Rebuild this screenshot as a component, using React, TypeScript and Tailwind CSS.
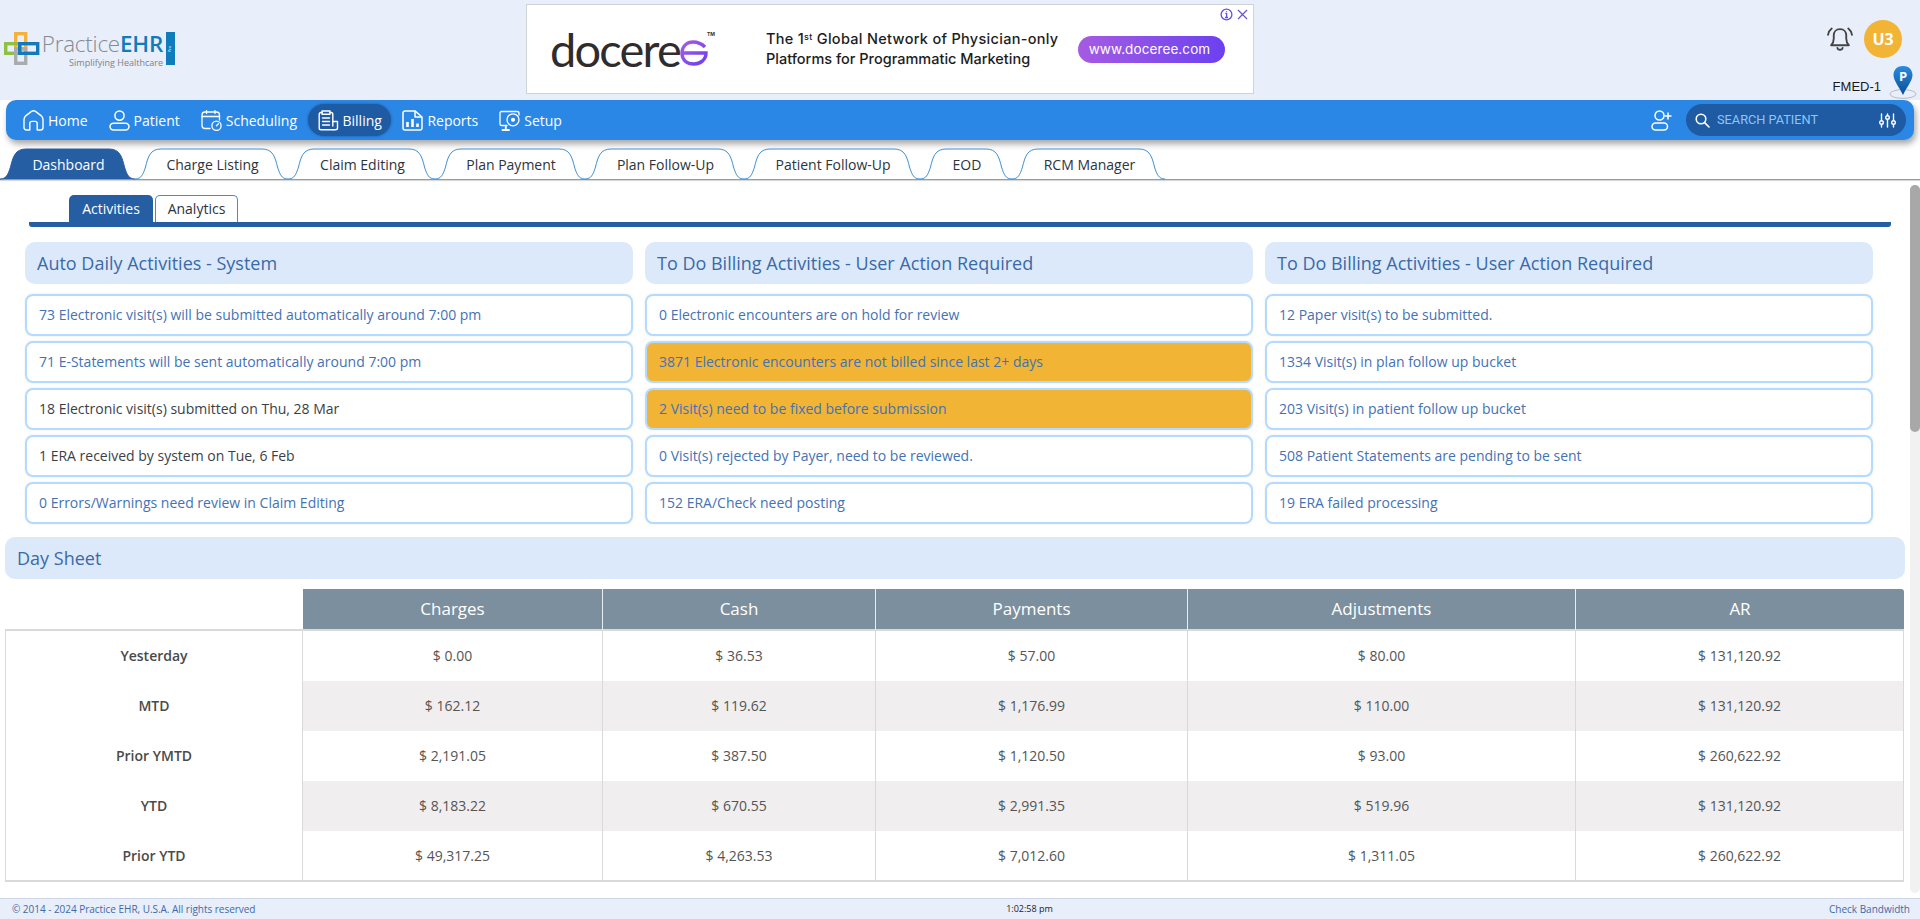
import React from "react";

const navIconClass = "w-[21px] h-[21px] shrink-0";

const HomeIcon = () => (
  <svg viewBox="0 0 21 21" className={navIconClass} fill="none" stroke="white" strokeWidth="1.4" strokeLinejoin="round" strokeLinecap="round">
    <path d="M1 9.5 C1 7.5 2 6.5 3 5.6 L8.5 1.4 C9.7 .6 11.3 .6 12.5 1.4 L18 5.6 C19 6.5 20 7.5 20 9.5 V17.5 C20 19 19 20 17.5 20 H14.2 V13.5 C14.2 12.2 13.3 11.4 12 11.4 H9 C7.7 11.4 6.8 12.2 6.8 13.5 V20 H3.5 C2 20 1 19 1 17.5 Z" />
  </svg>
);
const PatientIcon = () => (
  <svg viewBox="0 0 21 21" className={navIconClass} fill="none" stroke="white" strokeWidth="1.5">
    <circle cx="10.5" cy="5.6" r="4.6" />
    <rect x="1" y="13.2" width="19" height="6.8" rx="3.4" />
  </svg>
);
const ScheduleIcon = () => (
  <svg viewBox="0 0 21 21" className={navIconClass} fill="none" stroke="white" strokeWidth="1.3" strokeLinecap="round">
    <path d="M9 18.5 H4 C2.3 18.5 1 17.2 1 15.5 V5 C1 3.3 2.3 2 4 2 H15.5 C17.2 2 18.5 3.3 18.5 5 V10" />
    <path d="M1 6.5 H18.5 M5.5 .6 V3.5 M14 .6 V3.5" />
    <circle cx="15.5" cy="15.7" r="4.6" />
    <path d="M15.5 15.7 L17.4 13.8" />
  </svg>
);
const BillingIcon = () => (
  <svg viewBox="0 0 21 21" className={navIconClass} fill="none" stroke="white" strokeWidth="1.4" strokeLinecap="round" strokeLinejoin="round">
    <path d="M4 2.5 H3 C2 2.5 1.2 3.3 1.2 4.3 V18 C1.2 19 2 19.8 3 19.8 H15 M12 2.5 H13 C14 2.5 14.8 3.3 14.8 4.3 V16" />
    <path d="M4 1 H12 V4.2 H4 Z" />
    <path d="M4.5 8 H11.5 M4.5 11.5 H11.5 M4.5 15 H11.5" />
    <path d="M15 11.5 H19.5 V18 C19.5 19 18.7 19.8 17.5 19.8 H15" />
  </svg>
);
const ReportsIcon = () => (
  <svg viewBox="0 0 21 21" className={navIconClass} fill="none" stroke="white" strokeWidth="1.5" strokeLinejoin="round">
    <path d="M3 .9 H13 L20 7 V18 C20 19.2 19.2 20 18 20 H3 C1.8 20 1 19.2 1 18 V3 C1 1.8 1.8 .9 3 .9 Z" />
    <path d="M13 1 V7 H20" />
    <path d="M5.5 12 V17 M10.5 9 V17 M15.5 13.5 V17" strokeWidth="2.6" />
  </svg>
);
const SetupIcon = () => (
  <svg viewBox="0 0 21 21" className={navIconClass} fill="none" stroke="white" strokeWidth="1.3" strokeLinecap="round">
    <path d="M8 15.5 H2.5 C1.6 15.5 1 14.9 1 14 V3 C1 2.1 1.6 1.5 2.5 1.5 H18 C19.2 1.5 20 2.3 20 3.2 V5" />
    <circle cx="14" cy="9.8" r="6" />
    <circle cx="14" cy="9.8" r="1.4" fill="white" />
    <path d="M6.8 15.8 V19.5 M3.5 20 H10" strokeWidth="1.8" />
  </svg>
);

const navItems = [
  { label: "Home", icon: <HomeIcon /> },
  { label: "Patient", icon: <PatientIcon /> },
  { label: "Scheduling", icon: <ScheduleIcon /> },
  { label: "Billing", icon: <BillingIcon />, active: true },
  { label: "Reports", icon: <ReportsIcon /> },
  { label: "Setup", icon: <SetupIcon /> },
];

const tabs = [
  { label: "Dashboard", w: 135, active: true },
  { label: "Charge Listing", w: 153 },
  { label: "Claim Editing", w: 147 },
  { label: "Plan Payment", w: 150 },
  { label: "Plan Follow-Up", w: 159 },
  { label: "Patient Follow-Up", w: 176 },
  { label: "EOD", w: 92 },
  { label: "RCM Manager", w: 153 },
];

const Tab = ({ label, w, active }: { label: string; w: number; active?: boolean }) => {
  const d = `M0 31 C6 31 8 27 10.5 19 C13 9 15 1 26 1 L${w - 26} 1 C${w - 15} 1 ${w - 13} 9 ${w - 10.5} 19 C${w - 8} 27 ${w - 6} 31 ${w} 31`;
  return (
    <div className="relative h-[31px] flex items-center justify-center shrink-0" style={{ width: w }}>
      <svg className="absolute inset-0 overflow-visible" width={w} height={31} viewBox={`0 0 ${w} 31`}>
        <path d={d} fill={active ? "#265ea4" : "white"} stroke={active ? "#265ea4" : "#3d8fd3"} strokeWidth="1" />
      </svg>
      <span className={`relative text-[14px] mt-[2px] ml-[2px] ${active ? "text-white" : "text-[#2c3440]"}`}>{label}</span>
    </div>
  );
};

type Row = { t: string; dark?: boolean; warn?: boolean };
const columns: { title: string; rows: Row[] }[] = [
  {
    title: "Auto Daily Activities - System",
    rows: [
      { t: "73 Electronic visit(s) will be submitted automatically around 7:00 pm" },
      { t: "71 E-Statements will be sent automatically around 7:00 pm" },
      { t: "18 Electronic visit(s) submitted on Thu, 28 Mar", dark: true },
      { t: "1 ERA received by system on Tue, 6 Feb", dark: true },
      { t: "0 Errors/Warnings need review in Claim Editing" },
    ],
  },
  {
    title: "To Do Billing Activities - User Action Required",
    rows: [
      { t: "0 Electronic encounters are on hold for review" },
      { t: "3871 Electronic encounters are not billed since last 2+ days", warn: true },
      { t: "2 Visit(s) need to be fixed before submission", warn: true },
      { t: "0 Visit(s) rejected by Payer, need to be reviewed." },
      { t: "152 ERA/Check need posting" },
    ],
  },
  {
    title: "To Do Billing Activities - User Action Required",
    rows: [
      { t: "12 Paper visit(s) to be submitted." },
      { t: "1334 Visit(s) in plan follow up bucket" },
      { t: "203 Visit(s) in patient follow up bucket" },
      { t: "508 Patient Statements are pending to be sent" },
      { t: "19 ERA failed processing" },
    ],
  },
];

const headers = ["Charges", "Cash", "Payments", "Adjustments", "AR"];
const sheet = [
  ["Yesterday", "$ 0.00", "$ 36.53", "$ 57.00", "$ 80.00", "$ 131,120.92"],
  ["MTD", "$ 162.12", "$ 119.62", "$ 1,176.99", "$ 110.00", "$ 131,120.92"],
  ["Prior YMTD", "$ 2,191.05", "$ 387.50", "$ 1,120.50", "$ 93.00", "$ 260,622.92"],
  ["YTD", "$ 8,183.22", "$ 670.55", "$ 2,991.35", "$ 519.96", "$ 131,120.92"],
  ["Prior YTD", "$ 49,317.25", "$ 4,263.53", "$ 7,012.60", "$ 1,311.05", "$ 260,622.92"],
];

const Logo = () => (
  <div className="flex items-start mt-[32px] ml-[4px] w-[522px]">
    <svg width="36" height="33" viewBox="0 0 36 33" fill="none" className="shrink-0">
      <rect x="11.7" y="1.7" width="10" height="15" stroke="#f4b23c" strokeWidth="3.4" />
      <rect x="1.7" y="11.7" width="14" height="9.6" stroke="#8dc13f" strokeWidth="3.4" />
      <rect x="11.7" y="17" width="10" height="14.3" stroke="#a9abad" strokeWidth="3.4" />
      <rect x="15.7" y="11.7" width="18" height="9.6" stroke="#1478bd" strokeWidth="3.4" />
    </svg>
    <div className="flex flex-col items-end ml-[1px] w-[122px]">
      <div className="text-[22.4px] leading-[24px] text-[#858b92] font-light whitespace-nowrap tracking-[-0.2px]">
        Practice<span className="text-[#0f7cbc] font-semibold">EHR</span>
      </div>
      <div className="text-[9px] leading-[11px] mt-[1px] text-[#7e8388] whitespace-nowrap">Simplifying Healthcare</div>
    </div>
    <div className="ml-[3px] w-[9px] h-[33px] bg-[#0f7cbc] flex items-center justify-center">
      <span className="text-[4px] text-white rotate-[-90deg]">Pro</span>
    </div>
  </div>
);

const Ad = () => (
  <div className="relative mt-[4px] w-[728px] h-[90px] bg-white border border-[#cfd2d6] flex items-center shrink-0 font-['Inter',sans-serif]">
    <div className="flex items-center ml-[23px] w-[216px] shrink-0">
      <span className="text-[47px] leading-[50px] text-[#2f2c2e] font-['Lato',sans-serif] tracking-[-1.8px]">docere</span>
      <svg width="30" height="28" viewBox="0 0 30 28" fill="none" className="mt-[7px] -ml-[1px]">
        <defs>
          <linearGradient id="dg" x1="0" y1="0" x2="1" y2="1">
            <stop offset="0" stopColor="#a95ce0" />
            <stop offset="1" stopColor="#6a3ff0" />
          </linearGradient>
        </defs>
        <path d="M3 14 C3 7 8 3 14 3 C19 3 23 5 26 8 M3 14 H27 C27 21 21 25 15 25 C8 25 3 21 3 14" stroke="url(#dg)" strokeWidth="3.4" />
      </svg>
      <span className="text-[5px] font-bold text-[#333] self-start mt-[7px] -ml-[2px]">TM</span>
    </div>
    <div className="text-[14.5px] leading-[20px] font-medium text-[#1c1c1c] w-[312px] shrink-0 whitespace-nowrap">
      <div className="tracking-[0.3px]">The 1<sup className="text-[9px]">st</sup> Global Network of Physician-only</div>
      <div>Platforms for Programmatic Marketing</div>
    </div>
    <div className="w-[147px] h-[27px] rounded-full bg-gradient-to-r from-[#a65ae2] to-[#6c40f0] text-white text-[13.5px] tracking-[0.1px] pr-[4px] flex items-center justify-center shrink-0">
      www.doceree.com
    </div>
    <div className="absolute right-[5px] top-[3px] flex items-center gap-[4px]">
      <svg width="13" height="13" viewBox="0 0 13 13" fill="none" stroke="#6a4fd8" strokeWidth="1.3">
        <circle cx="6.5" cy="6.5" r="5.4" />
        <path d="M6.5 3.2 V3.9 M5.3 5.4 H6.6 V9.4 M5 9.5 H8" />
      </svg>
      <svg width="11" height="11" viewBox="0 0 11 11" fill="none" stroke="#6a4fd8" strokeWidth="1.2">
        <path d="M1 1 L10 10 M10 1 L1 10" />
      </svg>
    </div>
  </div>
);

const HeaderRight = () => (
  <div className="flex-1 relative flex flex-col items-end pr-[4px]">
    <div className="flex items-center mt-[20px] mr-[14px] gap-[11px]">
      <svg width="26" height="26" viewBox="0 0 25 25" fill="none" stroke="#444" strokeWidth="1.8" strokeLinecap="round" strokeLinejoin="round">
        <path d="M12.5 3 C8.5 3 6.5 6 6.5 9 V12 C6.5 15 5.5 17 4 18.5 H21 C19.5 17 18.5 15 18.5 12 V9 C18.5 6 16.5 3 12.5 3 Z" />
        <path d="M10 21 C10.5 23.5 14.5 23.5 15 21" />
        <path d="M4.5 2.5 C2.5 4 1.5 6 1 8.5 M20.5 2.5 C22.5 4 23.5 6 24 8.5" />
      </svg>
      <div className="w-[38px] h-[38px] rounded-full bg-[#f1b434] text-white text-[16px] font-bold flex items-center justify-center">U3</div>
    </div>
    <div className="flex items-end mt-[8px] h-[34px] -mr-[1px]">
      <span className="text-[13px] leading-[15px] text-[#1a1a1a] font-['Liberation_Sans',sans-serif] mb-[6px] mr-[8px]">FMED-1</span>
      <svg width="28" height="34" viewBox="0 0 28 34" fill="none">
        <ellipse cx="14" cy="28" rx="13" ry="4.4" stroke="#b9bcc0" strokeWidth="1" />
        <defs>
          <linearGradient id="pin" x1="0" y1="0" x2="0" y2="1">
            <stop offset="0" stopColor="#2a8be0" />
            <stop offset="1" stopColor="#0b4d96" />
          </linearGradient>
        </defs>
        <path d="M14 0 C21 0 23.5 5 23.5 9 C23.5 15 17 22 14 29 C11 22 4.5 15 4.5 9 C4.5 5 7 0 14 0 Z" fill="url(#pin)" />
        <text x="14" y="15" textAnchor="middle" fontSize="13" fontWeight="700" fill="white" fontFamily="Open Sans">P</text>
      </svg>
    </div>
  </div>
);

const Nav = () => (
  <div className="mx-[6px] h-[40px] rounded-[10px] bg-[#2b87e6] shadow-[2px_4px_6px_rgba(0,0,0,0.35)] flex items-center justify-between pl-[6.5px] pr-[8px]">
    <div className="flex items-center">
      {navItems.map((n) => (
        <div
          key={n.label}
          className={`h-[32px] flex items-center gap-[4px] text-[14px] text-white rounded-full ${n.active ? "bg-[#1f5ba3] shadow-[0_0_3px_rgba(20,60,120,0.6)] pl-[10px] pr-[9px] mr-[1px]" : "px-[10.5px]"}`}
        >
          {n.icon}
          <span>{n.label}</span>
        </div>
      ))}
    </div>
    <div className="flex items-center gap-[14px]">
      <svg width="21" height="21" viewBox="0 0 21 21" fill="none" stroke="white" strokeWidth="1.5" strokeLinecap="round">
        <circle cx="8.5" cy="5.5" r="4.5" />
        <rect x="1" y="13" width="15.5" height="7" rx="3.5" />
        <path d="M17 3 V9 M14 6 H20" />
      </svg>
      <div className="w-[220px] h-[32px] rounded-full bg-[#1f5ba3] flex items-center pl-[9px] pr-[10px]">
        <svg width="15" height="15" viewBox="0 0 15 15" fill="none" stroke="white" strokeWidth="1.6" strokeLinecap="round" className="shrink-0">
          <circle cx="6" cy="6" r="4.8" />
          <path d="M9.6 9.6 L14 14" />
        </svg>
        <span className="ml-[7px] text-[12.75px] text-[#8fc4f7] font-['Roboto',sans-serif] flex-1">SEARCH PATIENT</span>
        <svg width="17" height="15" viewBox="0 0 17 15" fill="none" stroke="white" strokeWidth="1.4" strokeLinecap="round">
          <path d="M2.5 1 V14 M8.5 1 V14 M14.5 1 V14" />
          <circle cx="2.5" cy="9.5" r="1.8" fill="#1f5ba3" />
          <circle cx="8.5" cy="4.5" r="1.8" fill="#1f5ba3" />
          <circle cx="14.5" cy="9.5" r="1.8" fill="#1f5ba3" />
        </svg>
      </div>
    </div>
  </div>
);

const SubTabs = () => (
  <div className="ml-[29px] mr-[19px] mt-[15px]">
    <div className="flex items-end pl-[40px] gap-[2px] h-[27px]">
      <div className="w-[84px] h-[27px] bg-[#265ea4] text-white text-[14px] rounded-t-[5px] flex items-center justify-center pb-[1px]">Activities</div>
      <div className="w-[83px] h-[27px] bg-white border border-b-0 border-[#3d8fd3] text-[#2c3440] text-[14px] rounded-t-[5px] flex items-center justify-center pb-[1px]">Analytics</div>
    </div>
    <div className="h-[5px] bg-[#265ea4] rounded-b-[3px]" />
  </div>
);

const Activities = () => (
  <div className="grid grid-cols-3 gap-x-[12px] ml-[25px] mr-[37px] mt-[15px]">
    {columns.map((c, i) => (
      <div key={i} className="flex flex-col">
        <div className="h-[42px] rounded-[10px] bg-[#dbe9fb] text-[#3a6aa8] text-[18px] flex items-center pl-[12px]">{c.title}</div>
        <div className="mt-[10px] flex flex-col gap-[5px]">
          {c.rows.map((r) => (
            <div
              key={r.t}
              className={`h-[42px] rounded-[8px] border-2 border-[#b3dbff] flex items-center pl-[12px] pb-[2px] text-[14px] shadow-[0_0_3px_rgba(0,0,0,0.08)] ${r.warn ? "bg-[#f1b434]" : "bg-white"} ${r.dark ? "text-[#3a3f47]" : "text-[#4472b4]"}`}
            >
              {r.t}
            </div>
          ))}
        </div>
      </div>
    ))}
  </div>
);

const DaySheet = () => (
  <>
    <div className="ml-[5px] mr-[5px] mt-[13px] h-[42px] rounded-[10px] bg-[#dbe9fb] text-[#3a6aa8] text-[18px] flex items-center pl-[12px]">Day Sheet</div>
    <div className="ml-[5px] mr-[6px] mt-[10px] grid grid-cols-[298px_300px_273px_312px_388px_328px]">
      <div className="h-[42px] border-b-2 border-[#d9d9d9]" />
      {headers.map((h, i) => (
        <div
          key={h}
          className={`h-[42px] bg-[#7b8f9e] text-white text-[17px] flex items-center justify-center border-b-2 border-[#d9d9d9] ${i < headers.length - 1 ? "border-r border-r-[#e8edf0]" : "rounded-tr-[3px]"}`}
        >
          {h}
        </div>
      ))}
      {sheet.map((row, ri) =>
        row.map((cell, ci) => {
          const isLast = ri === sheet.length - 1;
          const border = ci === 0 ? "border-l border-l-[#d9d9d9] border-r border-r-[#d9d9d9]" : "border-r border-r-[#d9d9d9]";
          const bg = ri % 2 === 1 && ci > 0 ? "bg-[#f0eeef]" : "bg-white";
          const last = isLast ? "h-[51px] border-b-2 border-b-[#d9d9d9]" : "h-[50px] pb-[1px]";
          return (
            <div
              key={ri + "-" + ci}
              className={`flex items-center justify-center text-[14px] ${border} ${bg} ${last} ${ci === 0 ? "font-semibold text-[#4a4a4a]" : "text-[#555]"}`}
            >
              {cell}
            </div>
          );
        })
      )}
    </div>
  </>
);

export default function App() {
  return (
    <div className="h-screen w-full flex flex-col overflow-hidden bg-white font-['Open_Sans',sans-serif]">
      <div className="bg-[#e8eefa] h-[100px] flex shrink-0 relative">
        <Logo />
        <Ad />
        <HeaderRight />
      </div>
      <Nav />
      <div className="mt-[8px] h-[32px] flex items-start border-b border-[#999] shadow-[0_1px_1px_rgba(0,0,0,0.15)] shrink-0">
        {tabs.map((t) => (
          <Tab key={t.label} {...t} />
        ))}
      </div>
      <div className="flex-1 flex min-h-0">
        <div className="flex-1 min-w-0">
          <SubTabs />
          <Activities />
          <DaySheet />
        </div>
        <div className="w-[10px] mt-[5px] mb-[5px] bg-[#f1f1f1] rounded-full flex flex-col shrink-0">
          <div className="h-[247px] rounded-full bg-[#a8a8a8]" />
        </div>
      </div>
      <div className="h-[21px] bg-[#e8eefa] border-t border-[#ccd6e6] shrink-0 grid grid-cols-3 items-center px-[12px] text-[10px]">
        <span className="text-[#3f6aa8] whitespace-nowrap tracking-[-0.03px]">© 2014 - 2024 Practice EHR, U.S.A. All rights reserved</span>
        <span className="text-[#222] text-[9px] text-center pl-[139px]">1:02:58 pm</span>
        <span className="text-[#3f6aa8] text-right -mr-[2px]">Check Bandwidth</span>
      </div>
    </div>
  );
}
